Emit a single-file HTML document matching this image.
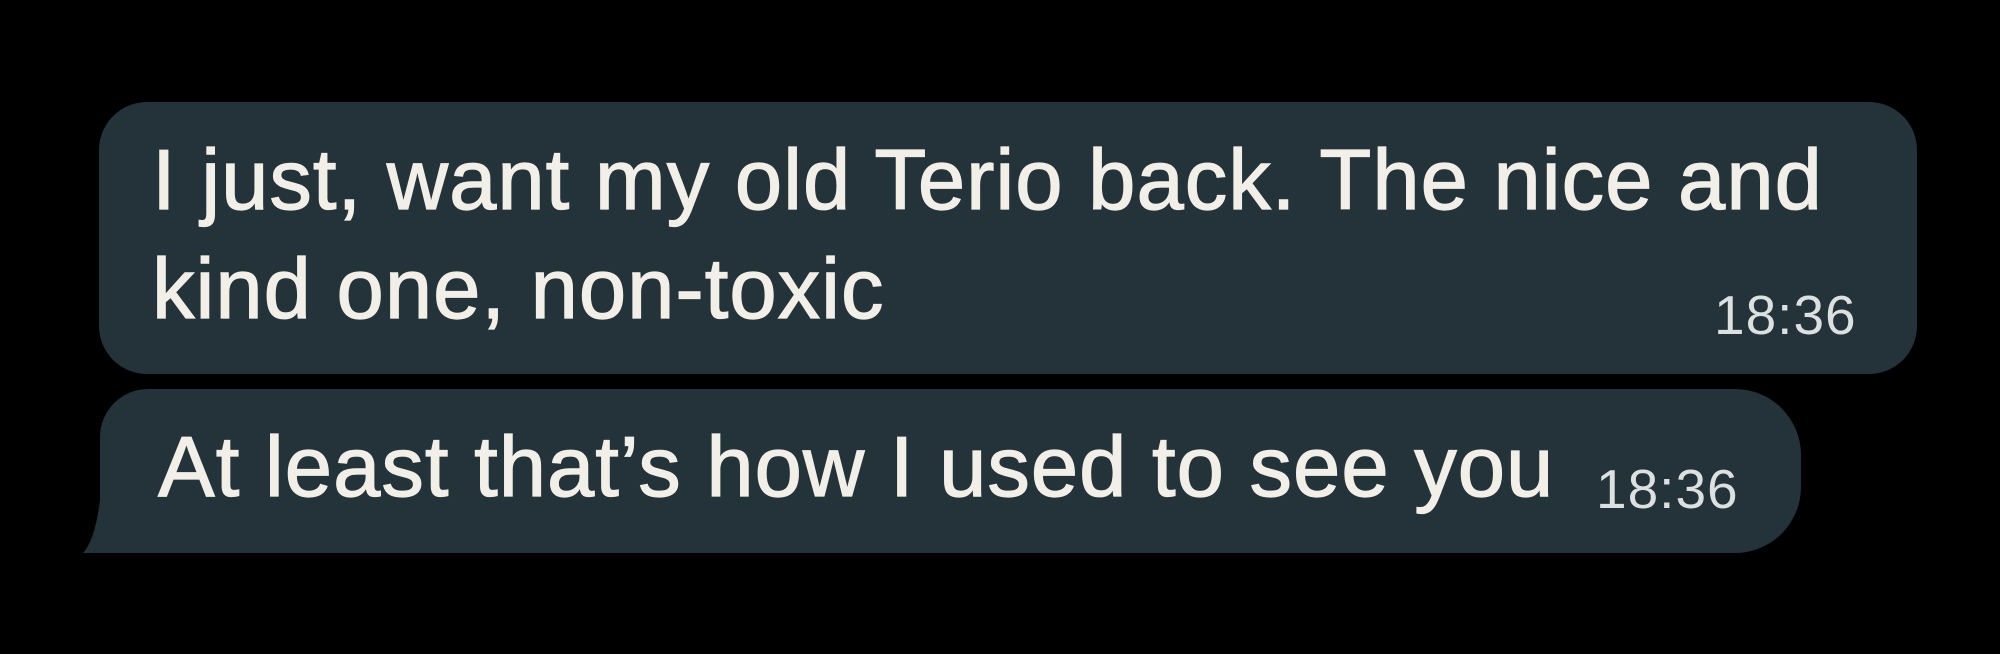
<!DOCTYPE html>
<html><head><style>
html,body{margin:0;padding:0;background:#000;width:2000px;height:654px;overflow:hidden;position:relative;font-family:"Liberation Sans",sans-serif;color:#f2efe9}
.b{position:absolute;background:#24323a}
.t{position:absolute;font-size:85px;white-space:nowrap;line-height:1;letter-spacing:1px;-webkit-text-stroke:1.2px #f2efe9}
.tm{position:absolute;font-size:55px;color:#dde0e0;line-height:1;letter-spacing:1px}
</style></head><body>
<div class="b" style="left:99px;top:102px;width:1818px;height:272px;border-radius:48px"></div>
<div class="b" style="left:100px;top:389px;width:1701px;height:164px;border-radius:48px 66px 66px 30px"></div>
<svg style="position:absolute;left:80px;top:500px" width="80" height="60"><path d="M20 0 L30 0 L40 40 Q55 44 70 53 L3 53 Q15 40 20 0Z" fill="#24323a"/></svg>
<div class="t" style="left:152px;top:138px">I just, want my old Terio back. The nice and</div>
<div class="t" style="left:152px;top:247px">kind one, non-toxic</div>
<div class="tm" style="left:1714px;top:288px">18:36</div>
<div class="t" style="left:158px;top:425px">At least that’s how I used to see you</div>
<div class="tm" style="left:1596px;top:462px">18:36</div>
</body></html>
